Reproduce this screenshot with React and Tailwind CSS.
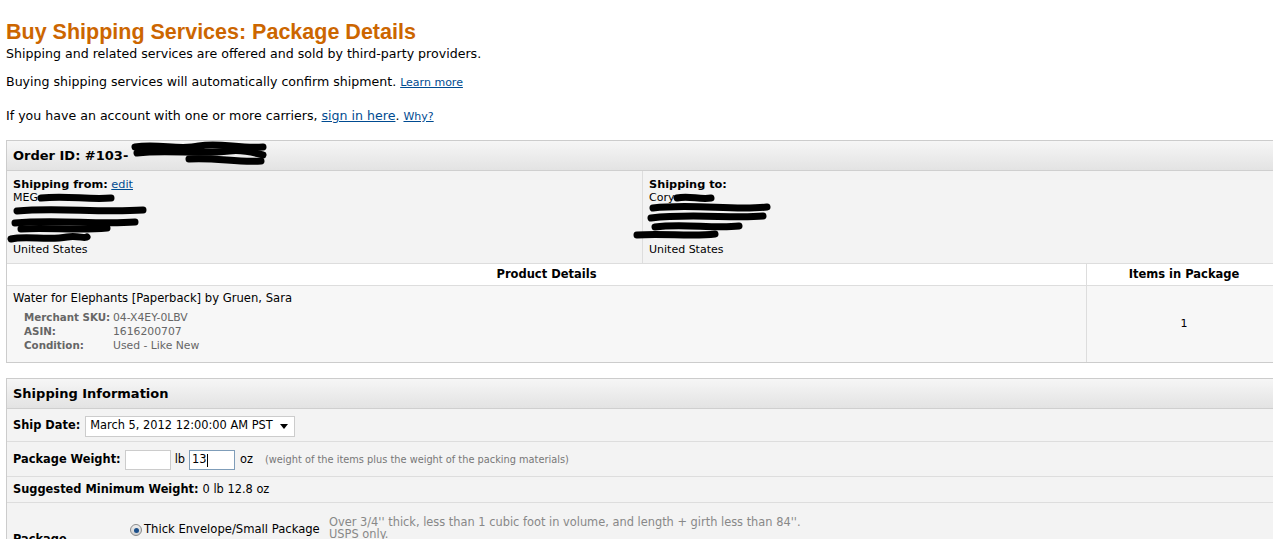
import React from "react";

const verdana = "font-['DejaVu_Sans',Verdana,sans-serif]";

// black marker scribble used to hide private data
function Scribble({ width, height, lines }) {
  return (
    <svg width={width} height={height} viewBox={`0 0 ${width} ${height}`} className="absolute">
      {lines.map((d, i) => (
        <path key={i} d={d} stroke="#000" strokeWidth="7" fill="none" strokeLinecap="round" strokeLinejoin="round" />
      ))}
    </svg>
  );
}

function SectionHeader({ children }) {
  return (
    <div className="h-[30px] flex items-center px-[6px] pt-[1px] bg-gradient-to-b from-[#f6f6f6] to-[#e3e3e3] border-b border-[#cfcfcf] text-[13px] font-bold text-black">
      {children}
    </div>
  );
}

export default function App() {
  return (
    <div className={`w-[1273px] h-[539px] overflow-hidden bg-white text-black ${verdana}`}>
      <div className="pl-[6px] pt-[19px]">
        <h1 className="font-['Liberation_Sans',Arial,sans-serif] font-bold text-[21.5px] leading-[26px] text-[#cc6600]">
          Buy Shipping Services: Package Details
        </h1>
        <p className="mt-[1px] text-[12.6px] leading-[16px]">
          Shipping and related services are offered and sold by third-party providers.
        </p>
        <p className="mt-[12px] text-[12.6px] leading-[16px]">
          Buying shipping services will automatically confirm shipment.{" "}
          <a href="#" className="text-[11px] text-[#004b91] underline">Learn more</a>
        </p>
        <p className="mt-[17px] text-[12.6px] leading-[16px]">
          If you have an account with one or more carriers,{" "}
          <a href="#" className="text-[#004b91] underline">sign in here</a>.{" "}
          <a href="#" className="text-[11px] text-[#004b91] underline">Why?</a>
        </p>

        {/* order box */}
        <div className="mt-[15px] w-[1276px] border border-[#cccccc]">
          <SectionHeader>
            <span className="relative">
              Order ID: #103-
              <span className="absolute left-[116px] top-[-9px]">
                <Scribble
                  width={140}
                  height={32}
                  lines={[
                    "M6 10 C30 6 50 14 70 9 C90 5 110 12 134 10",
                    "M8 16 C40 12 70 18 100 14 C115 12 125 16 134 18",
                    "M60 22 C85 20 110 26 132 24",
                  ]}
                />
              </span>
            </span>
          </SectionHeader>

          <div className="grid grid-cols-[636px_1fr] bg-[#f3f3f3] border-b border-[#dddddd] text-[11px] leading-[13px]">
            <div className="relative px-[6px] pt-[7px] pb-[7px] border-r border-[#dddddd]">
              <div className="text-[11.3px]">
                <span className="font-bold">Shipping from:</span>{" "}
                <a href="#" className="text-[#004b91] underline">edit</a>
              </div>
              <div>MEG</div>
              <div>&nbsp;</div>
              <div>&nbsp;</div>
              <div>&nbsp;</div>
              <div>United States</div>
              <span className="absolute left-0 top-[20px]">
                <Scribble
                  width={146}
                  height={56}
                  lines={[
                    "M34 7 C60 4 80 9 104 7",
                    "M10 20 C50 16 90 22 136 19",
                    "M8 32 C50 28 90 34 128 31",
                    "M14 38 C40 36 70 40 100 37",
                    "M4 48 C20 44 40 50 60 46 C70 44 78 48 80 46",
                  ]}
                />
              </span>
            </div>
            <div className="relative px-[6px] pt-[7px] pb-[7px]">
              <div className="font-bold text-[11.3px]">Shipping to:</div>
              <div>Cory</div>
              <div>&nbsp;</div>
              <div>&nbsp;</div>
              <div>&nbsp;</div>
              <div>United States</div>
              <span className="absolute left-[-10px] top-[20px]">
                <Scribble
                  width={146}
                  height={56}
                  lines={[
                    "M44 7 C56 4 66 9 78 7",
                    "M20 17 C60 12 100 20 134 16",
                    "M18 27 C60 22 100 28 130 25",
                    "M22 36 C50 32 80 38 106 35",
                    "M4 44 C30 42 60 46 82 43",
                  ]}
                />
              </span>
            </div>
          </div>

          {/* product table */}
          <div className="grid grid-cols-[1080px_1fr] text-[11.5px]">
            <div className="h-[22px] flex items-center justify-center font-bold bg-white border-b border-r border-[#dddddd]">
              Product Details
            </div>
            <div className="h-[22px] flex items-center justify-center font-bold bg-white border-b border-[#dddddd]">
              Items in Package
            </div>
            <div className="h-[76px] bg-[#f7f7f7] border-r border-[#dddddd] px-[6px] pt-[6px]">
              <div className="leading-[13px] text-[11.6px]">Water for Elephants [Paperback] by Gruen, Sara</div>
              <div className="mt-[5px] pl-[11px] text-[10.8px] leading-[14px] text-[#666666] whitespace-nowrap">
                <div className="flex items-baseline h-[14px]">
                  <span className="w-[89px] shrink-0 font-bold text-[10.3px]">Merchant SKU:</span>
                  <span>04-X4EY-0LBV</span>
                </div>
                <div className="flex items-baseline h-[14px]">
                  <span className="w-[89px] shrink-0 font-bold text-[10.3px]">ASIN:</span>
                  <span>1616200707</span>
                </div>
                <div className="flex items-baseline h-[14px]">
                  <span className="w-[89px] shrink-0 font-bold text-[10.3px]">Condition:</span>
                  <span>Used - Like New</span>
                </div>
              </div>
            </div>
            <div className="h-[76px] bg-[#f7f7f7] flex items-center justify-center text-[11px]">1</div>
          </div>
        </div>

        {/* shipping information */}
        <div className="mt-[15px] w-[1276px] border border-[#cccccc] bg-[#f3f3f3] text-[11.4px]">
          <SectionHeader>Shipping Information</SectionHeader>
          <div className="h-[33px] flex items-center px-[6px] pt-[2px] border-b border-[#dddddd]">
            <span className="font-bold">Ship Date:</span>
            <div className="ml-[5px] h-[21px] w-[210px] bg-white border border-[#cccccc] flex items-center justify-between pl-[4px] pr-[6px]">
              <span>March 5, 2012 12:00:00 AM PST</span>
              <svg width="8" height="5" viewBox="0 0 8 5">
                <path d="M0 0 H8 L4 5 Z" fill="#000" />
              </svg>
            </div>
          </div>
          <div className="h-[35px] flex items-center px-[6px] pt-[2px] border-b border-[#dddddd]">
            <span className="font-bold">Package Weight:</span>
            <div className="ml-[4px] h-[20px] w-[46px] bg-white border border-[#cccccc]" />
            <span className="ml-[4px]">lb</span>
            <div className="ml-[4px] h-[20px] w-[46px] bg-white border border-[#7f9db9] flex items-center pl-[2px]">
              13<span className="w-px h-[13px] bg-black" />
            </div>
            <span className="ml-[5px]">oz</span>
            <span className="ml-[12px] text-[9.8px] text-[#777777]">
              (weight of the items plus the weight of the packing materials)
            </span>
          </div>
          <div className="h-[26px] flex items-center px-[6px] border-b border-[#dddddd]">
            <span className="font-bold">Suggested Minimum Weight:</span>
            <span className="ml-[4px]">0 lb 12.8 oz</span>
          </div>
          <div className="h-[60px] flex px-[6px] pt-[14px]">
            <span className="w-[117px] font-bold pt-[14px]">Package</span>
            <div className="flex items-center h-[26px]">
              <span className="w-[12px] h-[12px] rounded-full border border-[#8a8a8a] bg-gradient-to-b from-[#eeeeee] to-[#cfcfcf] flex items-center justify-center">
                <span className="w-[5px] h-[5px] rounded-full bg-[#1b4f8a]" />
              </span>
              <span className="ml-[2px] w-[185px] text-[11.6px]">Thick Envelope/Small Package</span>
              <span className="mb-[4px] leading-[12px] text-[#888888]">
                Over 3/4'' thick, less than 1 cubic foot in volume, and length + girth less than 84''.
                <br />
                USPS only.
              </span>
            </div>
          </div>
        </div>
      </div>
    </div>
  );
}
